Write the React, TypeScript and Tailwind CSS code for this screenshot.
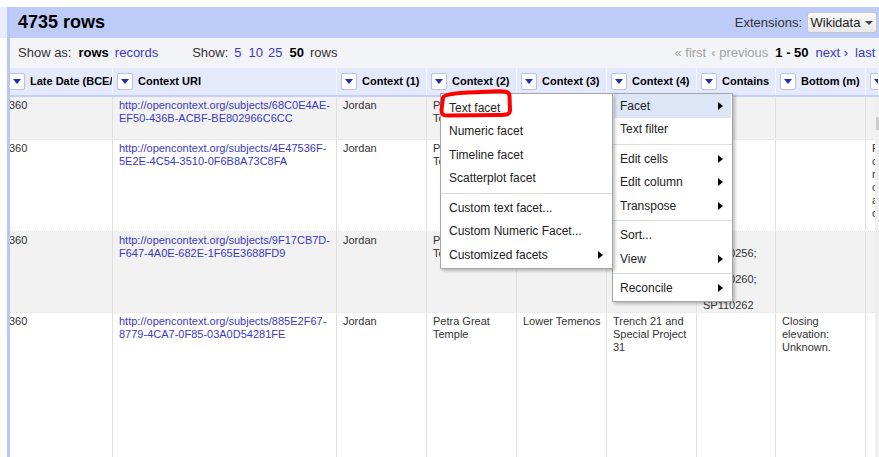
import React from "react";

const GRID = "grid grid-cols-[103px_224px_90px_90px_90px_90px_79px_90px_9px_4px]";
const HEAD_GRID = "grid grid-cols-[103px_224px_90px_90px_90px_90px_79px_90px_13px]";

type Row = {
  h: string;
  bg: string;
  url: string[];
  ctx2: string[];
  ctx3: string[];
  ctx4: string[];
  contains: string[];
  bottom: string[];
  last: string[];
  thumb?: boolean;
};

const rows: Row[] = [
  {
    h: "h-[43px]",
    bg: "bg-[#f2f2f2]",
    url: ["http://opencontext.org/subjects/68C0E4AE-", "EF50-436B-ACBF-BE802966C6CC"],
    ctx2: ["Petra Great", "Temple"],
    ctx3: ["Lower Temenos"],
    ctx4: ["Trench 21 and", "Special Project", "31"],
    contains: [],
    bottom: [],
    last: [],
    thumb: true,
  },
  {
    h: "h-[92px]",
    bg: "bg-white",
    url: ["http://opencontext.org/subjects/4E47536F-", "5E2E-4C54-3510-0F6B8A73C8FA"],
    ctx2: ["Petra Great", "Temple"],
    ctx3: ["Lower Temenos"],
    ctx4: ["Trench 21 and", "Special Project", "31"],
    contains: [],
    bottom: [],
    last: ["Fill", "consisting", "reddish", "compact", "and", "clay"],
  },
  {
    h: "h-[81px]",
    bg: "bg-[#f2f2f2]",
    url: ["http://opencontext.org/subjects/9F17CB7D-", "F647-4A0E-682E-1F65E3688FD9"],
    ctx2: ["Petra Great", "Temple"],
    ctx3: ["Lower Temenos"],
    ctx4: ["Trench 21 and", "Special Project", "31"],
    contains: ["\u00a0", "SP110256;", "\u00a0", "SP110260;", "\u00a0", "SP110262"],
    bottom: [],
    last: [],
  },
  {
    h: "h-[150px]",
    bg: "bg-white",
    url: ["http://opencontext.org/subjects/885E2F67-", "8779-4CA7-0F85-03A0D54281FE"],
    ctx2: ["Petra Great", "Temple"],
    ctx3: ["Lower Temenos"],
    ctx4: ["Trench 21 and", "Special Project", "31"],
    contains: [],
    bottom: ["Closing", "elevation:", "Unknown."],
    last: [],
  },
];

const HeadBtn = () => (
  <span className="flex h-[17px] w-[16px] shrink-0 items-center justify-center rounded-[2px] border border-[#b7c2e6] bg-white">
    <span className="h-0 w-0 border-x-[4.5px] border-t-[5px] border-x-transparent border-t-[#1f2fb5]" />
  </span>
);

const Lines = ({ lines }: { lines: string[] }) => (
  <>
    {lines.map((l, i) => (
      <div key={i} className="whitespace-nowrap">
        {l}
      </div>
    ))}
  </>
);

const Arrow = () => (
  <span className="h-0 w-0 border-y-[4.5px] border-l-[5px] border-y-transparent border-l-black" />
);

const Item = ({ label, arrow, active }: { label: string; arrow?: boolean; active?: boolean }) => (
  <div
    className={
      active
        ? "mx-[1px] flex h-[23.5px] items-center justify-between bg-[#dce6f7] pl-[6px] pr-[8px]"
        : "flex h-[23.5px] items-center justify-between pl-[7px] pr-[9px]"
    }
  >
    <span className="whitespace-nowrap">{label}</span>
    {arrow && <Arrow />}
  </div>
);

const Sep = () => (
  <div className="flex h-[6px] items-center">
    <div className="h-px w-full bg-[#dcdcdc]" />
  </div>
);

const cell = "overflow-hidden border-r border-[#e0e0e0] px-[6px] pt-[2px]";
const headCell =
  "flex items-center gap-[5px] overflow-hidden whitespace-nowrap border-r border-[#f4f6ff] pl-[4px]";

export default function App() {
  return (
    <div className="relative h-[457px] w-[879px] overflow-hidden bg-white font-['Liberation_Sans',Arial,sans-serif] text-[#333]">
      <div className="h-[7px]" />
      <div className="flex">
        <div className="w-[7px] shrink-0">
          <div className="h-[31px] bg-[#e8ecfb]" />
        </div>
        <div className="min-w-0 flex-1 border-l-[3px] border-[#b5c6f7]">
          {/* title bar */}
          <div className="flex h-[31px] items-center justify-between bg-[#bccbf8] pl-[8px] pr-[2px]">
            <span className="text-[18px] font-bold text-black">4735 rows</span>
            <div className="flex items-center text-[13px]">
              <span className="text-[#333]">Extensions:</span>
              <button className="ml-[5px] flex h-[21px] w-[70px] items-center justify-center gap-[5px] rounded-[3px] border border-[#c6c6c6] bg-gradient-to-b from-[#fafafa] to-[#e9e9e9] text-[13px] text-[#222]">
                Wikidata
                <span className="h-0 w-0 border-x-[4px] border-t-[4px] border-x-transparent border-t-[#444]" />
              </button>
            </div>
          </div>

          {/* view controls */}
          <div className="flex h-[30px] items-center overflow-hidden whitespace-nowrap bg-[#f3f4f7] pl-[8px] text-[13px]">
            <span>Show as:</span>
            <span className="ml-[7px] font-bold text-black">rows</span>
            <span className="ml-[6px] text-[#3a3ac4]">records</span>
            <span className="ml-[34px]">Show:</span>
            <span className="ml-[6px] text-[#3a3ac4]">5</span>
            <span className="ml-[7px] text-[#3a3ac4]">10</span>
            <span className="ml-[5px] text-[#3a3ac4]">25</span>
            <span className="ml-[7px] font-bold text-black">50</span>
            <span className="ml-[6px]">rows</span>
            <span className="ml-[337px] shrink-0 text-[#a3a3a3]">« first</span>
            <span className="ml-[5px] shrink-0 text-[#a3a3a3]">‹ previous</span>
            <span className="ml-[7px] shrink-0 font-bold text-black">1 - 50</span>
            <span className="ml-[7px] shrink-0 text-[#3a3ac4]">next ›</span>
            <span className="ml-[7px] shrink-0 text-[#3a3ac4]">last »</span>
          </div>

          {/* column headers */}
          <div className={`${HEAD_GRID} h-[29px] border-b-2 border-[#c4d0f5] bg-[#e4eafc] text-[11px] font-bold text-black`}>
            <div className="overflow-hidden border-r border-[#f4f6ff] pl-[4px]">
              <div className="-ml-[5px] flex h-full items-center gap-[5px] whitespace-nowrap">
                <HeadBtn />
                Late Date (BCE/CE)
              </div>
            </div>
            {["Context URI", "Context (1)", "Context (2)", "Context (3)", "Context (4)", "Contains", "Bottom (m)", "Top (m)"].map(
              (h) => (
                <div key={h} className={headCell}>
                  <HeadBtn />
                  {h}
                </div>
              )
            )}
          </div>

          {/* data rows */}
          {rows.map((r, i) => (
            <div key={i} className={`${GRID} ${r.h} ${r.bg} border-b border-dotted border-[#e6e6e6] text-[11px] leading-[13px]`}>
              <div className={cell}>
                <div className="-ml-[7px]">360</div>
              </div>
              <div className={`${cell} text-[#3a3ac4]`}>
                <Lines lines={r.url} />
              </div>
              <div className={cell}>Jordan</div>
              <div className={cell}>
                <Lines lines={r.ctx2} />
              </div>
              <div className={cell}>
                <Lines lines={r.ctx3} />
              </div>
              <div className={cell}>
                <Lines lines={r.ctx4} />
              </div>
              <div className={cell}>
                <Lines lines={r.contains} />
              </div>
              <div className={cell}>
                <Lines lines={r.bottom} />
              </div>
              <div className="overflow-hidden pl-[6px] pt-[2px]">
                <Lines lines={r.last} />
              </div>
              <div className="bg-[#f0f0f0]">
                {r.thumb && <div className="ml-[1px] mt-[20px] h-[13px] bg-[#cfcfcf]" />}
              </div>
            </div>
          ))}
        </div>
      </div>

      {/* column menu */}
      <div className="absolute left-[612px] top-[93px] w-[121px] border border-[#a6a6a6] bg-white pb-[1px] text-[12px] text-[#222] shadow-[2px_2px_3px_rgba(0,0,0,0.25)]">
        <Item label="Facet" arrow active />
        <Item label="Text filter" />
        <Sep />
        <Item label="Edit cells" arrow />
        <Item label="Edit column" arrow />
        <Item label="Transpose" arrow />
        <Sep />
        <Item label="Sort..." />
        <Item label="View" arrow />
        <Sep />
        <Item label="Reconcile" arrow />
      </div>

      {/* facet submenu */}
      <div className="absolute left-[440px] top-[93px] w-[173px] border border-[#a6a6a6] bg-white pb-[1px] pt-[2px] text-[12px] text-[#222] shadow-[2px_2px_3px_rgba(0,0,0,0.25)]">
        <div className="pl-[1px]">
          <Item label="Text facet" />
          <Item label="Numeric facet" />
          <Item label="Timeline facet" />
          <Item label="Scatterplot facet" />
        </div>
        <Sep />
        <div className="pl-[1px]">
          <Item label="Custom text facet..." />
          <Item label="Custom Numeric Facet..." />
          <Item label="Customized facets" arrow />
        </div>
      </div>

      {/* red highlight annotation */}
      <svg className="absolute left-[437px] top-[88px]" width="80" height="32" viewBox="0 0 80 32">
        <path
          d="M6 10 C 6 5, 30 4.5, 55 3.5 C 68 3, 72.5 3, 72.5 8 L 73 22 C 73 26.5, 70 27, 62 27 L 10 27.5 C 5.5 27.5, 4.5 26, 4.5 22 Z"
          fill="none"
          stroke="#ff0000"
          strokeWidth="4"
          strokeLinejoin="round"
        />
      </svg>
    </div>
  );
}
